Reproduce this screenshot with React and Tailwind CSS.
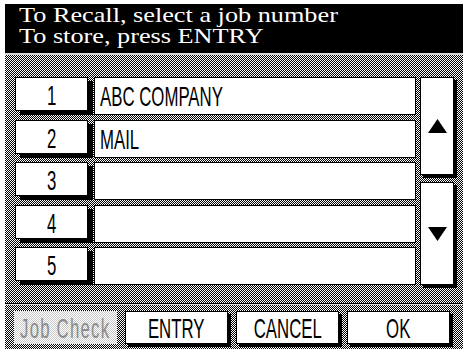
import React from "react";

const checker =
  "bg-[repeating-conic-gradient(#000_0%_25%,#fff_0%_50%)] bg-[length:2px_2px]";

function Narrow({ children, left }) {
  return (
    <span
      className={
        left
          ? "inline-block origin-left scale-x-[0.6] whitespace-nowrap font-['Liberation_Sans',sans-serif] text-[28px] leading-none text-black"
          : "inline-block scale-x-[0.6] whitespace-nowrap font-['Liberation_Sans',sans-serif] text-[28px] leading-none text-black"
      }
    >
      {children}
    </span>
  );
}

function Row({ n, label, mt }) {
  return (
    <div className={"flex h-[38px] " + mt}>
      <div className="flex h-[34px] w-[73px] items-center justify-center border border-black bg-white pt-[3px] shadow-[5px_4px_0_#000]">
        <Narrow>{n}</Narrow>
      </div>
      <div className="ml-[6px] flex h-[38px] w-[322px] items-center border border-black bg-white pl-[5px] pt-[1px]">
        {label ? <Narrow left>{label}</Narrow> : null}
      </div>
    </div>
  );
}

export default function App() {
  return (
    <div className="h-[353px] w-[467px] overflow-hidden bg-white">
      <div className="ml-[5px] pt-[4px] w-[458px]">
        <div className="h-[49px] bg-black pl-[14px] pt-[1px] font-['Liberation_Serif',serif] text-[21px] leading-[21px] text-white">
          <div className="origin-left scale-x-[1.25] whitespace-nowrap">
            To Recall, select a job number
          </div>
          <div className="origin-left scale-x-[1.25] whitespace-nowrap">
            To store, press ENTRY
          </div>
        </div>
        <div className="h-[2px] bg-[#d4d4d4]" />
        <div className={"flex h-[248px] pl-[10px] pt-[22px] " + checker}>
          <div className="flex flex-col">
            <Row n="1" label="ABC COMPANY" mt="" />
            <Row n="2" label="MAIL" mt="mt-[5px]" />
            <Row n="3" label="" mt="mt-[4px]" />
            <Row n="4" label="" mt="mt-[5px]" />
            <Row n="5" label="" mt="mt-[4px]" />
          </div>
          <div className="ml-[4px] flex flex-col">
            <div className="flex h-[98px] w-[34px] items-center justify-center border border-black bg-white shadow-[3px_3px_0_#000]">
              <svg width="19" height="14" viewBox="0 0 19 14">
                <polygon points="9.5,0 19,14 0,14" fill="#000" />
              </svg>
            </div>
            <div className="mt-[7px] flex h-[103px] w-[34px] items-center justify-center border border-black bg-white shadow-[3px_3px_0_#000]">
              <svg width="19" height="14" viewBox="0 0 19 14">
                <polygon points="0,0 19,0 9.5,14" fill="#000" />
              </svg>
            </div>
          </div>
        </div>
        <div className="h-[1px] bg-black" />
        <div className="h-[1px] bg-[#dcdcdc]" />
        <div className={"flex h-[44px] gap-[8px] pl-[9px] pt-[6px] " + checker}>
          <div className="flex h-[33px] w-[103px] items-center justify-center bg-[repeating-conic-gradient(#c8c8c8_0%_25%,#fff_0%_50%)] bg-[length:2px_2px] pt-[2px]">
            <span className="inline-block scale-x-[0.6] whitespace-nowrap font-['Liberation_Sans',sans-serif] text-[28px] leading-none tracking-[2px] text-[#8c8c8c]">
              Job Check
            </span>
          </div>
          <div className="flex h-[33px] w-[103px] items-center justify-center border border-black bg-white pt-[2px] shadow-[3px_3px_0_#000]">
            <Narrow>ENTRY</Narrow>
          </div>
          <div className="flex h-[33px] w-[103px] items-center justify-center border border-black bg-white pt-[2px] shadow-[3px_3px_0_#000]">
            <Narrow>CANCEL</Narrow>
          </div>
          <div className="flex h-[33px] w-[103px] items-center justify-center border border-black bg-white pt-[2px] shadow-[3px_3px_0_#000]">
            <Narrow>OK</Narrow>
          </div>
        </div>
      </div>
    </div>
  );
}
